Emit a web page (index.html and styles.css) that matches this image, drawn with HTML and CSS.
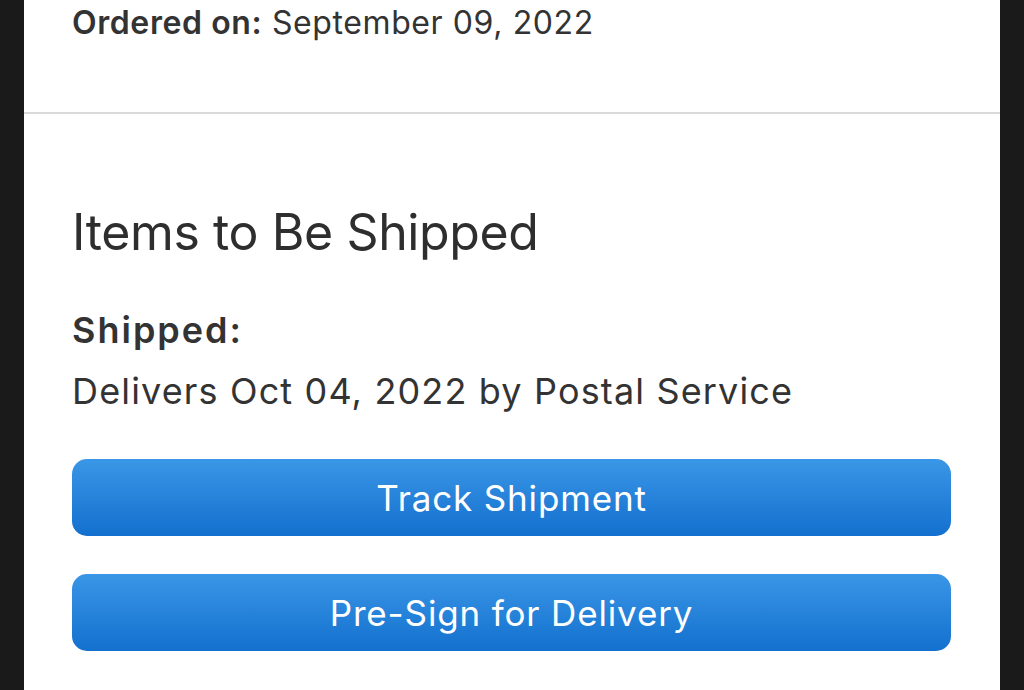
FILE: index.html
```html
<!DOCTYPE html>
<html lang="en">
<head>
  <meta charset="UTF-8" />
  <meta name="viewport" content="width=device-width, initial-scale=1.0"/>
  <title>Order Details</title>
  <link rel="stylesheet" href="styles.css">
</head>
<body>

  <div class="page">

    <!-- Order summary -->
    <div class="order-meta">
      <p class="meta-line"><strong>Ordered on:</strong> September 09, 2022</p>
    </div>

    <!-- Shipment -->
    <div class="shipment">
      <h2 class="section-title">Items to Be Shipped</h2>
      <p class="status-label">Shipped:</p>
      <p class="status-text">Delivers Oct 04, 2022 by Postal Service</p>

      <div class="actions">
        <button class="btn">Track Shipment</button>
        <button class="btn">Pre-Sign for Delivery</button>
      </div>
    </div>

  </div>

</body>
</html>
```

FILE: styles.css
```css
* {
  box-sizing: border-box;
  margin: 0;
  padding: 0;
}

body {
  font-family: Inter, "Noto Sans", sans-serif;
  background: #1a1a1a;
  color: #333;
  height: 690px;
  overflow: hidden;
}

.page {
  margin: 0 24px;
  background: #fff;
  height: 690px;
}

.order-meta {
  height: 114px;
  padding: 3px 48px 0;
  border-bottom: 2px solid #dadada;
}

.meta-line {
  font-size: 32px;
  line-height: 40px;
  letter-spacing: 0.6px;
}

.meta-line strong {
  font-weight: 600;
}

.shipment {
  padding: 88px 49px 0 48px;
}

.section-title {
  font-size: 50px;
  font-weight: 400;
  line-height: 60px;
  letter-spacing: -0.4px;
  color: #2e2e2e;
}

.status-label {
  margin-top: 48px;
  font-size: 36px;
  font-weight: 600;
  line-height: 40px;
  letter-spacing: 2px;
}

.status-text {
  margin-top: 21px;
  font-size: 36px;
  line-height: 40px;
  letter-spacing: 1.15px;
}

.actions {
  display: flex;
  flex-direction: column;
  gap: 38px;
  margin-top: 48px;
}

.btn {
  height: 77px;
  border: none;
  border-radius: 15px;
  background: linear-gradient(to bottom, #3a96e6, #1370ce);
  color: #fff;
  font-family: inherit;
  font-size: 35px;
  letter-spacing: 0.85px;
}
```
